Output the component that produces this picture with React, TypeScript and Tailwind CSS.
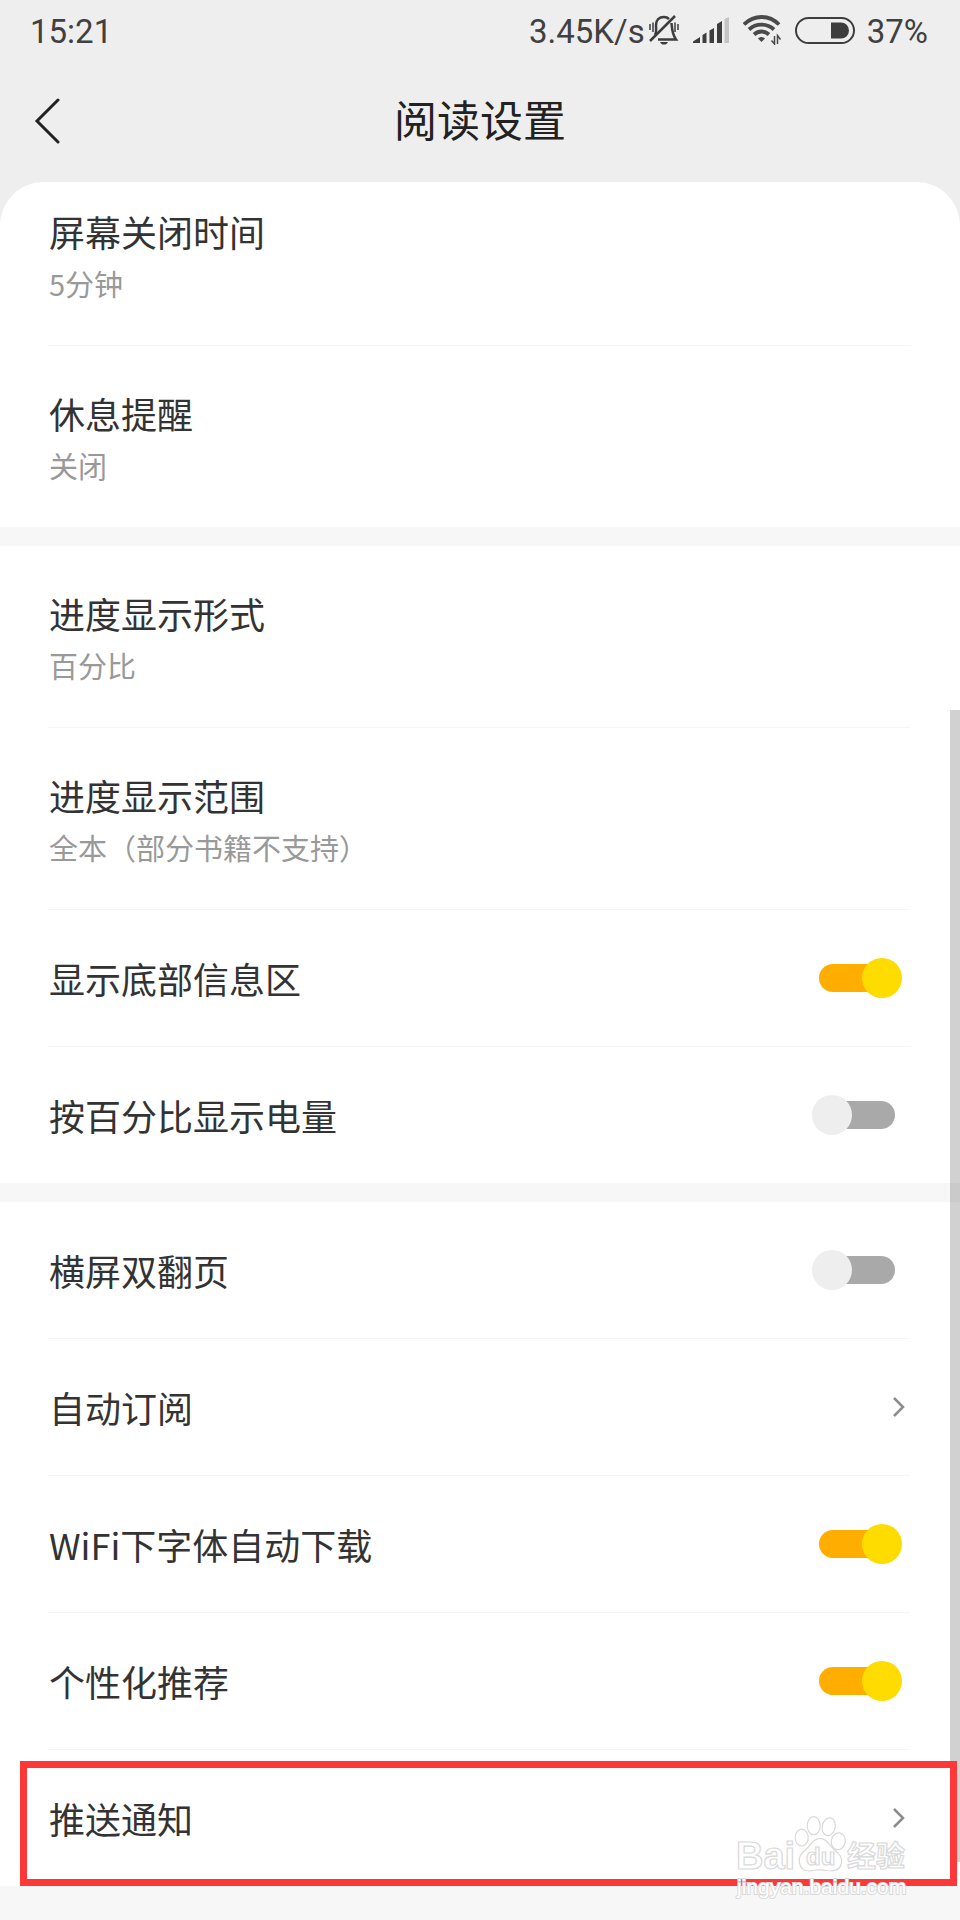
import { useState } from "react";

interface Item {
  label: string;
  detail?: string;
  kind: "value" | "toggle" | "link";
  on?: boolean;
}

const groups: Item[][] = [
  [
    { label: "屏幕关闭时间", detail: "5分钟", kind: "value" },
    { label: "休息提醒", detail: "关闭", kind: "value" },
  ],
  [
    { label: "进度显示形式", detail: "百分比", kind: "value" },
    { label: "进度显示范围", detail: "全本（部分书籍不支持）", kind: "value" },
    { label: "显示底部信息区", kind: "toggle", on: true },
    { label: "按百分比显示电量", kind: "toggle", on: false },
  ],
  [
    { label: "横屏双翻页", kind: "toggle", on: false },
    { label: "自动订阅", kind: "link" },
    { label: "WiFi下字体自动下载", kind: "toggle", on: true },
    { label: "个性化推荐", kind: "toggle", on: true },
    { label: "推送通知", kind: "link" },
  ],
];

function MutedBell() {
  return (
    <svg width="30" height="30" viewBox="0 0 30 30" fill="none" stroke="#3d3d3d" strokeWidth="2.5">
      <path d="M6 20 C8 17 7 14 7 10 C7 5 10 2 15 2 C17 2 19 3 20 4" />
      <path d="M22.5 8 C23 14 23 19 27 24.5 H9" />
      <path d="M1 26 L26 1" />
      <path d="M11 27 H19 C18 29 17 29.5 15 29.5 C13 29.5 12 29 11 27 Z" fill="#3d3d3d" stroke="none" />
      <path d="M1 9 V15 M4 7.5 V17 M26 7.5 V17 M29 9 V15" strokeWidth="1.5" />
    </svg>
  );
}

function Signal() {
  return (
    <svg width="36" height="26" viewBox="0 0 36 26" fill="#3d3d3d">
      <path d="M0 26 V24.5 L7 20 V26 Z M9.5 26 V18 L13.5 15.5 V26 Z M16.5 26 V13.5 L21 11 V26 Z M24 26 V7 L29 4 V26 Z" />
      <path d="M31.5 26 V2 L36 0 V26 Z" fill="#c4c4c4" />
    </svg>
  );
}

function Wifi() {
  return (
    <svg width="38" height="30" viewBox="0 0 38 30" fill="none" stroke="#4a4a4a" strokeWidth="3.8">
      <path d="M1 9.5 C11 -0.5 26 -0.5 36 9.5" />
      <path d="M6 14.5 C13 8 24 8 31 14.5" />
      <path d="M11 19.5 C15.5 15.5 21.5 15.5 26 19.5" />
      <path d="M15 23.5 C17 21.5 20 21.5 22 23.5 L18.5 27 Z" fill="#4a4a4a" stroke="none" />
      <path d="M31.5 21 V29 L28.5 25.5 M34.5 29 V20.5 L37.5 24.5" strokeWidth="1.5" />
    </svg>
  );
}

function Battery() {
  return (
    <svg width="60" height="27" viewBox="0 0 60 27">
      <rect x="1" y="1" width="58" height="25" rx="12.5" fill="none" stroke="#3d3d3d" strokeWidth="2" />
      <path d="M36 5.5 H46 A8 8 0 0 1 46 21.5 H36 Z" fill="#3d3d3d" />
    </svg>
  );
}

function StatusBar() {
  return (
    <div className="flex h-[60px] items-center justify-between pr-8 pl-[30px] font-[Roboto,sans-serif] text-[33px] text-[#404040]">
      <span className="pt-1">15:21</span>
      <div className="flex items-center">
        <span className="pt-1">3.45K/s</span>
        <div className="mr-3 ml-1 flex items-center gap-3.5">
          <MutedBell />
          <Signal />
          <Wifi />
          <Battery />
        </div>
        <span className="pt-1">37%</span>
      </div>
    </div>
  );
}

function Arrow() {
  return (
    <svg width="13" height="22" viewBox="0 0 13 22" fill="none" stroke="#8c8c8c" strokeWidth="2.5">
      <path d="M2 2 L11 11 L2 20" />
    </svg>
  );
}

function Row({ item }: { item: Item }) {
  const [on, setOn] = useState(Boolean(item.on));

  if (item.kind === "toggle") {
    return (
      <label className="flex h-[136px] items-center justify-between pr-[65px] pl-[49px]">
        <span className="text-4xl text-[#333]">{item.label}</span>
        <input
          type="checkbox"
          checked={on}
          onChange={() => setOn(!on)}
          className="relative h-7 w-[76px] appearance-none rounded-full bg-[#a9a9a9] before:absolute before:-top-1.5 before:-left-[7px] before:size-10 before:rounded-full before:bg-[#eee] checked:bg-[#ffae00] checked:before:left-[43px] checked:before:bg-[#ffdc00]"
        />
      </label>
    );
  }

  if (item.kind === "link") {
    return (
      <a href="#" className="flex h-[136px] items-center justify-between pr-[55px] pl-[49px]">
        <span className="text-4xl text-[#333]">{item.label}</span>
        <Arrow />
      </a>
    );
  }

  return (
    <button type="button" className="flex w-full flex-col items-start gap-2 pt-[43px] pb-[42px] pl-[49px] text-left">
      <span className="text-4xl leading-[48px] text-[#333]">{item.label}</span>
      <span className="text-[29px] leading-10 text-[#999]">{item.detail}</span>
    </button>
  );
}

function Watermark() {
  return (
    <svg
      className="pointer-events-none absolute right-[45px] -bottom-[18px]"
      width="180"
      height="90"
      viewBox="0 0 180 90"
      fill="#fff"
      stroke="#d9d9d9"
      strokeWidth="1.2"
    >
      <text x="1" y="55" fontSize="38" fontWeight="700" fontFamily="Liberation Sans, sans-serif">Bai</text>
      <ellipse cx="66.7" cy="23.7" rx="6.5" ry="8.5" />
      <ellipse cx="78.7" cy="11.7" rx="6.5" ry="9" />
      <ellipse cx="93.7" cy="12.7" rx="6.5" ry="9" transform="rotate(12 93.7 12.7)" />
      <ellipse cx="103.3" cy="27.3" rx="7" ry="8.5" transform="rotate(10 103.3 27.3)" />
      <path d="M85 24.5 C78 24.5 76 31 71 35.5 C66 39.5 63 43 64.5 49 C66 56 72 58 78 56.5 C83 55.5 87 55.5 92 56.5 C99 58 105 56 106.5 49 C107.5 43 104 39.5 99 35.5 C94 31 92 24.5 85 24.5 Z" />
      <text x="71" y="51" fontSize="24" fontWeight="700" fontFamily="Liberation Sans, sans-serif">du</text>
      <text x="112" y="53" fontSize="29" fontWeight="700" fontFamily="Noto Sans CJK SC, sans-serif">经验</text>
      <text x="2" y="80" fontSize="21" fontFamily="Liberation Sans, sans-serif" paintOrder="stroke" strokeWidth="2">
        jingyan.baidu.com
      </text>
    </svg>
  );
}

export default function App() {
  return (
    <div className="min-h-screen bg-[#f7f7f7] font-['Noto_Sans_CJK_SC',sans-serif]">
      <div className="bg-[#eee]">
        <StatusBar />
        <header className="grid h-[122px] grid-cols-[1fr_auto_1fr] items-center px-[34px]">
          <button type="button" aria-label="返回" className="justify-self-start">
            <svg width="26" height="46" viewBox="0 0 26 46" fill="none" stroke="#222" strokeWidth="3" strokeLinecap="round">
              <path d="M24 2 L3 23 L24 44" />
            </svg>
          </button>
          <h1 className="pb-1.5 text-[43px] leading-[60px] text-[#222]">阅读设置</h1>
        </header>
        <main className="relative">
          <div className="flex flex-col gap-[19px] overflow-hidden rounded-t-[44px] bg-[#f7f7f7]">
            {groups.map((group, i) => (
              <ul key={i} className="bg-white first:-mt-[18px]">
                {group.map((item, j) => (
                  <li key={item.label}>
                    {j > 0 && <div className="mr-[50px] ml-12 h-px bg-[#f5f5f5]" />}
                    <Row item={item} />
                  </li>
                ))}
              </ul>
            ))}
          </div>
          <div className="absolute top-[528px] right-0 bottom-6 w-2.5 bg-black/18" />
          <div className="pointer-events-none absolute right-[3px] bottom-0 left-5 h-[125px] border-[7px] border-[#fd3838]" />
          <Watermark />
        </main>
      </div>
    </div>
  );
}
